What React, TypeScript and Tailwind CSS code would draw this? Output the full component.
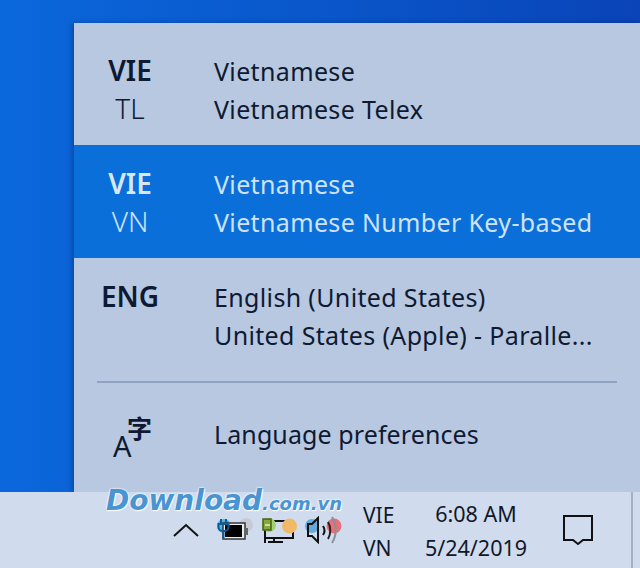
const FONT = "font-['Noto_Sans','Open_Sans',sans-serif]";

type LangRow = {
  code: string;
  sub?: string;
  name: string;
  layout: string;
  active?: boolean;
  height: string;
};

const rows: LangRow[] = [
  { code: 'VIE', sub: 'TL', name: 'Vietnamese', layout: 'Vietnamese Telex', height: 'h-[122px] pt-[29px]' },
  { code: 'VIE', sub: 'VN', name: 'Vietnamese', layout: 'Vietnamese Number Key-based', active: true, height: 'h-[113px] pt-[20px]' },
  { code: 'ENG', name: 'English (United States)', layout: 'United States (Apple) - Paralle...', height: 'h-[113px] pt-[20px]' },
];

function LanguageRow({ row }: { row: LangRow }) {
  const color = row.active ? 'bg-[#0a6fd8] text-[#cfe2f7]' : 'text-[#0e1a33]';
  return (
    <div className={`flex ${row.height} ${color}`}>
      <div className="-mt-[1px] w-[112px] shrink-0 text-center">
        <div className={`text-[28px] leading-[38px] font-semibold ${row.active ? 'text-[#d8e7f8]' : 'text-[#0e1a33]'}`}>{row.code}</div>
        {row.sub && <div className="text-[28px] leading-[38px] font-light">{row.sub}</div>}
      </div>
      <div className="ml-[28px] min-w-0 text-[25px] leading-[38px] tracking-[0.35px] whitespace-nowrap">
        <div>{row.name}</div>
        <div>{row.layout}</div>
      </div>
    </div>
  );
}

function PlugBattery() {
  return (
    <svg width="40" height="26" viewBox="0 0 40 26">
      <circle cx="31" cy="9" r="7" fill="#c6cbd3" />
      <circle cx="9" cy="10" r="7" fill="#4db6e4" />
      <rect x="8" y="7" width="22" height="16" fill="#e8edf4" stroke="#333" strokeWidth="1.5" />
      <rect x="10" y="9" width="17" height="12" fill="#000" />
      <rect x="30" y="12" width="3" height="7" fill="#666" />
      <path d="M6 3v5M11 3v5M3.5 8h10v3a4 4 0 0 1-4 4h-2a4 4 0 0 1-4-4zM8.5 15v8" fill="none" stroke="#0b5c9c" strokeWidth="2" />
    </svg>
  );
}

function NetworkIcon() {
  return (
    <svg width="38" height="28" viewBox="0 0 38 28">
      <path d="M5 5h28v17H5z" fill="none" stroke="#111" strokeWidth="2" />
      <circle cx="9" cy="9" r="7" fill="#a3cf6e" />
      <circle cx="29.5" cy="10" r="7.5" fill="#efb968" />
      <rect x="3" y="3" width="8" height="11" fill="#8aa83a" stroke="#45621a" strokeWidth="1.5" />
      <path d="M5 9h5" stroke="#e6efc8" strokeWidth="1.5" />
      <path d="M5 22v5M14 22v4M8 26h15" stroke="#111" strokeWidth="2" fill="none" />
    </svg>
  );
}

function SpeakerIcon() {
  return (
    <svg width="39" height="28" viewBox="0 0 39 28">
      <circle cx="8" cy="10" r="7" fill="#63a9dc" />
      <circle cx="30" cy="10" r="7.5" fill="#ea6f78" />
      <path d="M4 8h4l6-6v24l-6-6H4z" fill="none" stroke="#111" strokeWidth="2" />
      <path d="M19 10c2 3 2 6 0 9" fill="none" stroke="#111" strokeWidth="2" />
      <path d="M24 6c3 5 3 12 0 17" fill="none" stroke="#222" strokeWidth="2" />
      <path d="M28 1c5 8 5 18 0 26" fill="none" stroke="#8b8f98" strokeWidth="2" />
    </svg>
  );
}

export default function App() {
  return (
    <div className={`${FONT} relative flex h-[568px] w-[640px] flex-col overflow-hidden bg-[#0a62d4]`}>
      {/* desktop + flyout */}
      <div className="flex h-[492px] shrink-0 flex-col bg-gradient-to-r from-[#0b68dc] to-[#0a44b8] pl-[74px] pt-[23px]">
        <div className="flex h-[469px] flex-col bg-[#b8c8e0] shadow-[-2px_0_5px_rgba(0,30,90,0.4)]">
          {rows.map((row, i) => (
            <LanguageRow key={i} row={row} />
          ))}
          <div className="mx-[23px] mt-[10px] h-[2px] shrink-0 bg-[#8fa3c0]" />
          <div className="flex text-[#0e1a33]">
            <div className="relative h-[70px] w-[112px] shrink-0">
              <span className="absolute left-[39px] top-[47px] text-[29px] leading-[32px]">A</span>
              <span className="absolute left-[53px] top-[29px] font-['Noto_Sans_CJK_SC',sans-serif] text-[25px] leading-[30px] font-bold">字</span>
            </div>
            <div className="ml-[28px] pt-[32px] text-[25px] leading-[38px] tracking-[0.1px]">Language preferences</div>
          </div>
        </div>
      </div>

      {/* taskbar */}
      <div className="flex h-[76px] items-start bg-[#d0dced] text-[#111827]">
        <div className="ml-[173px] mt-[30px] w-[26px]">
          <svg width="26" height="16" viewBox="0 0 26 16">
            <path d="M1 14 13 3l12 11" fill="none" stroke="#111" strokeWidth="2" />
          </svg>
        </div>
        <div className="ml-[16px] mt-[24px]"><PlugBattery /></div>
        <div className="ml-[5px] mt-[24px]"><NetworkIcon /></div>
        <div className="ml-[6px] mt-[24px]"><SpeakerIcon /></div>
        <div className="ml-[20px] mt-[7px] w-[38px] text-[21px] leading-[33px]">
          <div>VIE</div>
          <div>VN</div>
        </div>
        <div className="ml-[23px] mt-[5px] w-[104px] text-center text-[21.5px] leading-[34px] whitespace-nowrap">
          <div>6:08 AM</div>
          <div>5/24/2019</div>
        </div>
        <div className="ml-[34px] mt-[22px]">
          <svg width="32" height="32" viewBox="0 0 32 32">
            <path d="M2 2h28v24H21l-5 4-5-4H2z" fill="none" stroke="#111" strokeWidth="2" />
          </svg>
        </div>
        <div className="ml-[37px] h-full w-[2px] bg-[#a3b0c4]" />
      </div>

      {/* watermark */}
      <div className="absolute left-[106px] top-[485px] font-['DejaVu_Sans',sans-serif] text-[28px] leading-[32px] font-bold italic text-[#4a94d2] [text-shadow:0_0_2px_#fff,0_0_2px_#fff,1px_1px_1px_#fff]">
        Download<span className="text-[18px]">.com.vn</span>
      </div>
    </div>
  );
}
